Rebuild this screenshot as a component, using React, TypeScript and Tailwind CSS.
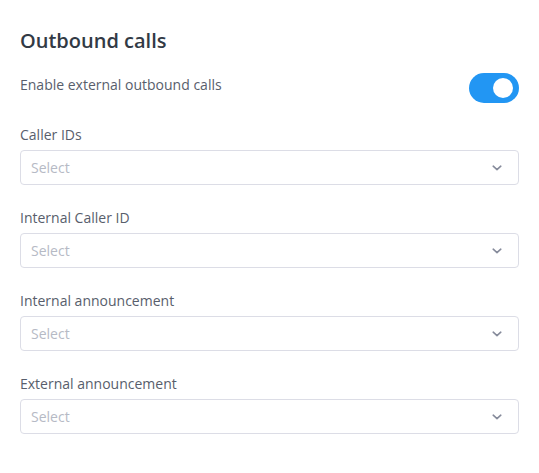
const FIELDS = ["Caller IDs", "Internal Caller ID", "Internal announcement", "External announcement"];

function SelectBox() {
  return (
    <div className="flex h-[35px] items-center justify-between rounded border border-[#dcdde6] bg-white pl-[10px] pr-[16px]">
      <span className="text-[14px] leading-5 text-[#b6bac5]">Select</span>
      <svg width="10" height="6" viewBox="0 0 10 6" fill="none">
        <path d="M1.2 1.2l3.8 3.4 3.8-3.4" stroke="#868b9b" strokeWidth="1.6" strokeLinecap="round" strokeLinejoin="round" />
      </svg>
    </div>
  );
}

export default function App() {
  return (
    <div className="min-h-[473px] w-[539px] bg-white px-5 pt-[27px] font-['Open_Sans',sans-serif]">
      <h2 className="text-[20px] font-semibold leading-7 text-[#323a45]">Outbound calls</h2>

      {/* Toggle row */}
      <div className="mt-[18px] flex items-start justify-between">
        <span className="mt-[2px] text-[14px] leading-5 text-[#585e6c]">Enable external outbound calls</span>
        <button
          type="button"
          aria-label="Enable external outbound calls"
          className="flex h-[30px] w-[50px] items-center justify-end rounded-full bg-[#2296f3] pr-[6px]"
        >
          <span className="block h-[20px] w-[20px] rounded-full bg-white" />
        </button>
      </div>

      <div className="mt-[22px] flex flex-col gap-[23px]">
        {FIELDS.map((label) => (
          <div key={label} className="flex flex-col gap-[5px]">
            <span className="text-[14px] leading-5 text-[#585e6c]">{label}</span>
            <SelectBox />
          </div>
        ))}
      </div>
    </div>
  );
}
